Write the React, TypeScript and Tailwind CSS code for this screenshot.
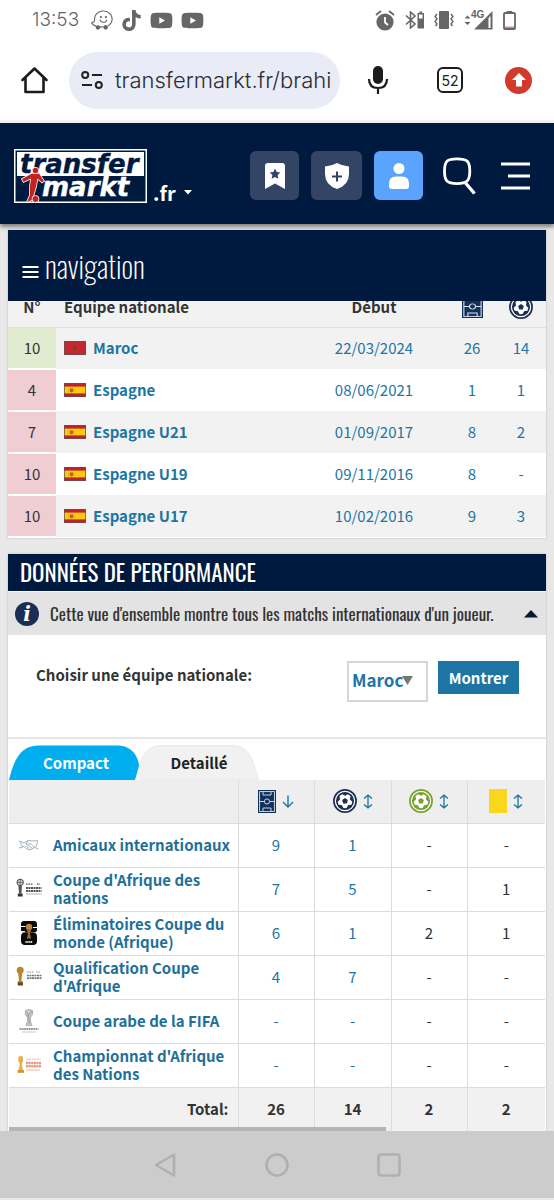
import React from "react";
import { FaTiktok, FaWaze, FaYoutube } from "react-icons/fa";

const BALL_ANGLES = [0, 72, 144, 216, 288];

function Ball({ color, size }: { color: string; size: number }) {
  return (
    <svg width={size} height={size} viewBox="0 0 24 24" aria-hidden="true">
      <circle cx="12" cy="12" r="11.1" fill="#fff" stroke={color} strokeWidth="1.7" />
      <circle cx="12" cy="12" r="8.2" fill="#fff" stroke={color} strokeWidth="1.7" />
      <path d="M12 9 L14.9 11.1 L13.8 14.5 H10.2 L9.1 11.1 Z" fill={color} />
      {BALL_ANGLES.map((a) => (
        <g key={a} transform={`rotate(${a} 12 12)`}>
          <path d="M8.8 3.8 H15.2 L14.3 5.6 L12 6.8 L9.7 5.6 Z" fill={color} />
        </g>
      ))}
    </svg>
  );
}

function Pitch({ wide = false }: { wide?: boolean }) {
  return (
    <svg width={wide ? 21 : 18} height={23} viewBox="0 0 18 23" preserveAspectRatio="none" aria-hidden="true">
      <rect width="18" height="23" fill="#12305c" />
      <g fill="none" stroke="#dfe6ee" strokeWidth="0.9">
        <rect x="1.6" y="1.6" width="14.8" height="19.8" />
        <path d="M1.6 11.5 H6.4 M11.6 11.5 H16.4" />
        <circle cx="9" cy="11.5" r="2.6" />
        <path d="M5 1.6 V5 H13 V1.6 M5 21.4 V18 H13 V21.4" />
      </g>
    </svg>
  );
}

function SortBoth() {
  return (
    <svg width="10" height="15" viewBox="0 0 10 15" fill="none" stroke="#1d75a3" strokeWidth="1.3" aria-hidden="true">
      <path d="M5 1.2 V13.8 M1 4.6 L5 1.2 L9 4.6 M1 10.4 L5 13.8 L9 10.4" />
    </svg>
  );
}

function SortDown() {
  return (
    <svg width="12" height="13" viewBox="0 0 12 13" fill="none" stroke="#1d75a3" strokeWidth="1.4" aria-hidden="true">
      <path d="M6 0.5 V11.8 M1 7 L6 12 L11 7" />
    </svg>
  );
}

function Flag({ country }: { country: "ma" | "es" }) {
  return (
    <svg className="block" width="22" height="14" viewBox="0 0 22 14" aria-hidden="true">
      {country === "ma" ? (
        <>
          <rect width="22" height="14" fill="#c4272f" />
          <path d="M11 4.6 L11.7 6.4 L13.4 6.4 L12.1 7.6 L12.6 9.4 L11 8.3 L9.4 9.4 L9.9 7.6 L8.6 6.4 L10.3 6.4 Z" fill="#5b4a2a" />
        </>
      ) : (
        <>
          <rect width="22" height="14" fill="#c0212b" />
          <rect y="3.6" width="22" height="6.8" fill="#fdc90a" />
          <path d="M6 5.4 H9 V8 Q9 9.4 7.5 9.4 Q6 9.4 6 8 Z" fill="#b5612c" />
          <path d="M5 5.6 V9.2 M10 5.6 V9.2" stroke="#c98a3a" strokeWidth="0.7" />
        </>
      )}
      <rect x="0.5" y="0.5" width="21" height="13" fill="none" stroke="#555" strokeOpacity="0.7" />
    </svg>
  );
}

type Emblem = "friendly" | "afcon" | "worldcup" | "afconq" | "arab" | "chan";

function Cup({ fill }: { fill: string }) {
  return (
    <g fill={fill}>
      <circle cx="4.2" cy="6.2" r="3.5" />
      <path d="M2.2 9 H6.2 L5.4 17 H3 Z" />
      <rect x="1.8" y="17" width="5" height="4" />
    </g>
  );
}

function CompetitionLogo({ kind }: { kind: Emblem }) {
  return (
    <svg className="block" width="26" height="26" viewBox="0 0 26 26" aria-hidden="true">
      {kind === "friendly" && (
        <g fill="none" stroke="#9aa9b3" strokeWidth="0.9">
          <path d="M3 9 L8 11 L12 8.5 L17 9 L22 8.6 M3 16 L7 15 M22 9.2 L20 14.5 M4 10.5 L7 15" />
          <path d="M7 14 L11 17 Q13 18.8 15 17.4 L20 14.5 M12 9 L10 12 Q12 13.2 14 11.4 L18.5 15 M10 14 L13.5 16.6 M12 13 L16 16.2" />
          <path d="M18 15.4 L22.5 17" />
        </g>
      )}
      {kind === "afcon" && (
        <>
          <g fill="#555">
            <circle cx="4.2" cy="6.4" r="3.2" fill="#ddd" stroke="#444" strokeWidth="1" />
            <path d="M1 6.4 H7.4 M4.2 3 V10" stroke="#555" strokeWidth="0.8" />
            <path d="M2.4 9.6 H6 L5.4 17.5 H3 Z" />
            <rect x="1.8" y="17.5" width="4.8" height="3" fill="#333" />
          </g>
          <path d="M10 8.2 H17 M21 8.2 H24" stroke="#555" strokeWidth="1.2" strokeDasharray="1.6 .8" />
          <path d="M10 12 H25.5 M10 15 H25.5" stroke="#555" strokeWidth="2.2" strokeDasharray="2 .5" />
          <path d="M10 18 H25.5" stroke="#aaa" strokeWidth="0.9" />
        </>
      )}
      {kind === "worldcup" && (
        <>
          <rect x="5" y="1" width="16" height="11.5" rx="3" fill="#0b0b0b" />
          <rect x="5" y="12.5" width="16" height="12.5" rx="4" fill="#0b0b0b" />
          <path d="M5 6.5 H9.5 M17 7.5 H21 M5 11.6 H9" stroke="#fff" strokeWidth="1" />
          <circle cx="13" cy="7" r="3.2" fill="#b5853d" />
          <path d="M10.8 9 H15.2 L14 14 L15.2 18.5 H10.8 L12 14 Z" fill="#98702f" />
          <path d="M9.5 22 H16.5" stroke="#ddd" strokeWidth="1.8" strokeDasharray="1.3 .5" />
        </>
      )}
      {kind === "afconq" && (
        <>
          <Cup fill="#b8872f" />
          <rect x="1.8" y="18.5" width="5" height="3" fill="#5d4526" />
          <path d="M11 8 H18" stroke="#888" strokeWidth="1" strokeDasharray="1.6 .8" />
          <path d="M20 8 H24" stroke="#d7a0a0" strokeWidth="1" />
          <path d="M11 11.5 H25.5 M11 14.2 H25.5" stroke="#777" strokeWidth="1.7" strokeDasharray="2 .5" />
        </>
      )}
      {kind === "arab" && (
        <>
          <path d="M9.5 2.5 Q13 .5 16.5 2.5 Q18 6 14.2 10 Q14.4 14 16 17.5 H10 Q11.7 13.5 11.8 10 Q8 6 9.5 2.5 Z" fill="#c9ccd0" stroke="#999" strokeWidth="0.7" />
          <path d="M10.5 4 Q14 8 13 16 M16 3 Q13 7 11.5 8" fill="none" stroke="#777" strokeWidth="0.6" />
          <path d="M3.5 21 H22.5" stroke="#777" strokeWidth="1.6" strokeDasharray="1.8 .5" />
          <path d="M6 24 H20" stroke="#bbb" strokeWidth="1" strokeDasharray="1.6 .5" />
        </>
      )}
      {kind === "chan" && (
        <>
          <path d="M2.4 5 Q4.6 3 7 5 Q7.6 9 5.8 12 L7 18.5 H2.4 L3.8 12 Q1.6 9 2.4 5 Z" fill="#e9b143" />
          <rect x="1.6" y="18" width="6.4" height="2.8" fill="#d79528" />
          <path d="M10.5 7.2 H24.5" stroke="#d9a9a2" strokeWidth="1" strokeDasharray="1.8 .8" />
          <path d="M10 11 H25 M10 14.3 H25" stroke="#ee9a80" strokeWidth="2.6" strokeDasharray="2.2 .4" />
          <path d="M10 18 H24" stroke="#f3c3ae" strokeWidth="1.2" />
        </>
      )}
    </svg>
  );
}

const teams: { no: string; flag: "ma" | "es"; name: string; date: string; games: string; goals: string }[] = [
  { no: "10", flag: "ma", name: "Maroc", date: "22/03/2024", games: "26", goals: "14" },
  { no: "4", flag: "es", name: "Espagne", date: "08/06/2021", games: "1", goals: "1" },
  { no: "7", flag: "es", name: "Espagne U21", date: "01/09/2017", games: "8", goals: "2" },
  { no: "10", flag: "es", name: "Espagne U19", date: "09/11/2016", games: "8", goals: "-" },
  { no: "10", flag: "es", name: "Espagne U17", date: "10/02/2016", games: "9", goals: "3" },
];

const competitions: { kind: Emblem; name: string; stats: string[] }[] = [
  { kind: "friendly", name: "Amicaux internationaux", stats: ["9", "1", "-", "-"] },
  { kind: "afcon", name: "Coupe d'Afrique des nations", stats: ["7", "5", "-", "1"] },
  { kind: "worldcup", name: "Éliminatoires Coupe du monde (Afrique)", stats: ["6", "1", "2", "1"] },
  { kind: "afconq", name: "Qualification Coupe d'Afrique", stats: ["4", "7", "-", "-"] },
  { kind: "arab", name: "Coupe arabe de la FIFA", stats: ["-", "-", "-", "-"] },
  { kind: "chan", name: "Championnat d'Afrique des Nations", stats: ["-", "-", "-", "-"] },
];

function StatusBar() {
  return (
    <div className="flex h-10 items-center justify-between pr-[38px] pl-8 font-['Inter',sans-serif] text-[#666]">
      <div className="flex items-center gap-2">
        <span className="mr-1 text-[19px] font-light">13:53</span>
        <FaWaze className="size-[22px]" />
        <FaTiktok className="size-[21px]" />
        <FaYoutube className="size-[23px]" />
        <FaYoutube className="size-[23px]" />
      </div>
      <div className="flex items-center gap-[10px]">
        <svg width="20" height="21" viewBox="0 0 20 21" aria-hidden="true">
          <circle cx="10" cy="12" r="8.6" fill="#666" />
          <path d="M1 5 L6 1 M19 5 L14 1" stroke="#666" strokeWidth="1.8" />
          <path d="M10 7 V12.5 L13 15" fill="none" stroke="#fff" strokeWidth="1.8" />
        </svg>
        <svg width="19" height="18" viewBox="0 0 19 18" aria-hidden="true">
          <path d="M1 4.5 L10 13 L5.500 17 V1 L10 5 L1 13.500" fill="none" stroke="#666" strokeWidth="1.600" />
          <path d="M14.500 0.500 H17 V2 H19 V17.500 H12.500 V2 H14.500 Z" fill="#666" />
          <rect x="14" y="3.500" width="3.500" height="4" fill="#fff" />
        </svg>
        <svg width="20" height="18" viewBox="0 0 20 18" aria-hidden="true">
          <rect x="5" y="0" width="10" height="18" rx="1" fill="#666" />
          <path d="M3 3 L1 5.5 L3 8 L1 10.5 L3 13 L1.5 15 M17 3 L19 5.5 L17 8 L19 10.5 L17 13 L18.500 15" fill="none" stroke="#666" strokeWidth="1.4" />
        </svg>
        <svg width="29" height="20" viewBox="0 0 29 20" aria-hidden="true">
          <path d="M0.500 8.500 L3.500 5.500 L6.500 8.500 Z M0.500 12 H6.500 L3.500 15 Z" fill="#666" />
          <path d="M10 19.500 L28.500 1 V19.500 Z" fill="#666" />
          <path d="M24.500 8 V18 H26.500 V6 Z" fill="#fff" />
          <text x="7" y="8" fontSize="10" fontWeight="700" fill="#666" fontFamily="Liberation Sans">4G</text>
        </svg>
        <svg width="13" height="19" viewBox="0 0 13 19" aria-hidden="true">
          <path d="M4 1.800 V0.500 H9 V1.800" fill="#666" stroke="#666" />
          <rect x="1" y="2" width="11" height="16" rx="1" fill="none" stroke="#666" strokeWidth="1.800" />
          <rect x="2" y="15.500" width="9" height="1.500" fill="#e08a80" />
        </svg>
      </div>
    </div>
  );
}

function BrowserBar() {
  return (
    <div className="flex h-[83px] items-center border-b-3 border-[#f3f3f6] pr-[22px] pl-5">
      <button aria-label="Accueil" className="mr-5 shrink-0">
        <svg className="block" width="29" height="28" viewBox="0 0 29 28" fill="none" stroke="#1b1b1b" strokeWidth="2.600" strokeLinejoin="round" strokeLinecap="round" aria-hidden="true">
          <path d="M2.500 14 L14.500 2.500 L26.500 14 M5.500 12 V26 H23.500 V12" />
        </svg>
      </button>
      <div className="flex h-[57px] min-w-0 flex-1 items-center gap-3 rounded-full bg-[#e9ecf6] pr-2 pl-3">
        <svg className="shrink-0" width="22" height="20" viewBox="0 0 22 20" fill="none" stroke="#222" strokeWidth="2" aria-hidden="true">
          <circle cx="4.200" cy="5" r="3" />
          <path d="M11 5 H21 M1 15 H11" />
          <circle cx="17.800" cy="15" r="3" />
        </svg>
        <input
          aria-label="Adresse"
          defaultValue="transfermarkt.fr/brahi"
          className="w-full min-w-0 bg-transparent font-['Inter',sans-serif] text-[22px] font-light text-[#2b2d33] outline-none"
        />
      </div>
      <button aria-label="Recherche vocale" className="ml-5 shrink-0">
        <svg className="block" width="36" height="36" viewBox="0 0 36 36" aria-hidden="true">
          <rect x="13" y="4" width="10" height="18" rx="5" fill="#1b1b1b" />
          <path d="M9 17 Q9 26 18 26 Q27 26 27 17 M18 26 V32" fill="none" stroke="#1b1b1b" strokeWidth="2.200" />
        </svg>
      </button>
      <button aria-label="Onglets" className="ml-[41px] flex size-[26px] shrink-0 items-center justify-center rounded-md border-2 border-[#1b1b1b] font-['Inter',sans-serif] text-[14px] text-[#222]">
        52
      </button>
      <button aria-label="Mise à jour" className="ml-[42px] flex size-[27px] shrink-0 items-center justify-center rounded-full bg-[#d33a2e]">
        <svg width="16" height="14" viewBox="0 0 16 14" aria-hidden="true">
          <path d="M8 0 L15 7 H11 V13.500 H5 V7 H1 Z" fill="#fff" />
        </svg>
      </button>
    </div>
  );
}

function SiteHeader() {
  return (
    <header className="relative z-20 flex h-[101px] items-center bg-[#001a3f] pt-1 pr-6 pl-[14px] shadow-[0_3px_4px_rgba(0,0,0,0.45)]">
      <a href="#accueil" aria-label="transfermarkt" className="shrink-0">
        <svg className="block" width="133" height="54" viewBox="0 0 133 54" aria-hidden="true">
          <rect width="133" height="54" fill="#fff" />
          <rect x="1.500" y="1.500" width="130" height="51" fill="#001a3f" />
          <rect x="3" y="3" width="127" height="24" fill="#fff" />
          <g fontFamily="DejaVu Sans" fontSize="26" fontWeight="700" fontStyle="italic">
            <text x="6" y="24" fill="#001a3f" stroke="#001a3f" strokeWidth="0.400">transfer</text>
            <text x="28" y="47" fill="#fff" stroke="#fff" strokeWidth="0.400">markt</text>
          </g>
          <g stroke="#fff" strokeWidth="1.600" paintOrder="stroke" fill="#c5221d">
            <path d="M8 30 L18 24.500 H25 L30 32 L28 33.500 L23.500 29.500 L22 38 L18 51 L13 53 L16 46 L16 37 L17 29.500 L9.500 33 Z" />
            <circle cx="21.500" cy="21.500" r="2.800" />
            <circle cx="21.500" cy="50" r="3" />
          </g>
        </svg>
      </a>
      <button className="mt-[34px] ml-[6px] flex shrink-0 items-center gap-2 text-[20px] leading-6 font-bold text-white">
        .fr
        <svg width="8" height="5" viewBox="0 0 8 5" aria-hidden="true"><path d="M0 0 H8 L4 4.500 Z" fill="#fff" /></svg>
      </button>
      <div className="ml-auto flex items-center">
        <button aria-label="Favoris" className="flex size-[49px] items-center justify-center rounded-md bg-[#334464]">
          <svg width="20" height="26" viewBox="0 0 20 26" aria-hidden="true">
            <path d="M3 0 H17 Q20 0 20 3 V26 L10 20.500 L0 26 V3 Q0 0 3 0 Z" fill="#fff" />
            <path d="M10 5.500 L11.700 9 L15.400 9.400 L12.600 12 L13.400 15.800 L10 13.900 L6.600 15.800 L7.400 12 L4.600 9.400 L8.300 9 Z" fill="#334464" />
          </svg>
        </button>
        <button aria-label="Clubs" className="ml-3 flex h-[49px] w-[51px] items-center justify-center rounded-md bg-[#334464]">
          <svg width="24" height="26" viewBox="0 0 24 26" aria-hidden="true">
            <path d="M12 0 Q17 3 24 3.500 V11 Q24 22 12 26 Q0 22 0 11 V3.500 Q7 3 12 0 Z" fill="#fff" />
            <path d="M12 8.500 V18.500 M7 13.500 H17" stroke="#334464" strokeWidth="2" />
          </svg>
        </button>
        <button aria-label="Mon compte" className="ml-3 flex size-[49px] items-center justify-center rounded-md bg-[#5ba4fd]">
          <svg width="20" height="26" viewBox="0 0 20 26" fill="#fff" aria-hidden="true">
            <circle cx="10" cy="5.500" r="5.500" />
            <path d="M7 13.500 H13 Q20 13.500 20 20.500 V23 Q20 26 17 26 H3 Q0 26 0 23 V20.500 Q0 13.500 7 13.500 Z" />
          </svg>
        </button>
        <button aria-label="Rechercher" className="ml-5">
          <svg className="block" width="33" height="38" viewBox="0 0 33 38" fill="none" stroke="#fff" strokeWidth="2.800" aria-hidden="true">
            <path d="M14 1.800 C24 1.800 26.800 4 26.800 14 C26.800 24 24 26.600 14 26.600 C4 26.600 1.500 24 1.500 14 C1.500 4 4 1.800 14 1.800 Z" />
            <path d="M22.500 26 L31.500 36.500" strokeWidth="3.400" />
          </svg>
        </button>
        <button aria-label="Menu" className="ml-6">
          <svg className="block" width="30" height="28" viewBox="0 0 30 28" stroke="#fff" strokeWidth="2.800" aria-hidden="true">
            <path d="M1 2 H30 M8 14 H30 M1 26 H30" />
          </svg>
        </button>
      </div>
    </header>
  );
}

function NationalTeams() {
  return (
    <section className="bg-white shadow-[0_0_2px_rgba(0,0,0,0.2)]">
      <button className="relative z-10 flex h-[71px] w-full items-center gap-[6px] bg-[#001a3f] pl-[14px] text-white">
        <svg className="mt-3" width="17" height="12" viewBox="0 0 17 12" stroke="#fff" strokeWidth="2" aria-hidden="true">
          <path d="M0.500 1 H16.500 M0.500 6 H16.500 M0.500 11 H16.500" />
        </svg>
        <span className="font-['Oswald',sans-serif] text-[30px] font-extralight">navigation</span>
      </button>
      <table className="-mt-[14px] w-full table-fixed border-collapse text-center text-[15px] leading-5">
        <colgroup>
          <col className="w-[48px]" />
          <col />
          <col className="w-[148px]" />
          <col className="w-[48px]" />
          <col className="w-[50px]" />
        </colgroup>
        <thead>
          <tr className="h-10 border-b border-[#e0e0e0] bg-[#f2f2f2] text-[#333]">
            <th className="font-bold">N°</th>
            <th className="pl-2 text-left font-bold">Équipe nationale</th>
            <th className="font-bold">Début</th>
            <th aria-label="Matchs"><span className="flex justify-center"><Pitch wide /></span></th>
            <th aria-label="Buts"><span className="flex justify-center"><Ball color="#1c2f52" size={24} /></span></th>
          </tr>
        </thead>
        <tbody className="text-[#1d75a3]">
          {teams.map((t, i) => (
            <tr key={t.name} className={i % 2 === 0 ? "h-[42px] bg-[#f2f2f2]" : "h-[42px] bg-white"}>
              <td className={i === 0 ? "border-b-2 border-white bg-[#e1ebd0] text-[#333]" : "border-b-2 border-white bg-[#f0cdd2] text-[#333]"}>{t.no}</td>
              <td className="pl-2">
                <a href="#equipe" className="flex items-center gap-[7px] font-bold"><Flag country={t.flag} />{t.name}</a>
              </td>
              <td>{t.date}</td>
              <td>{t.games}</td>
              <td>{t.goals}</td>
            </tr>
          ))}
        </tbody>
      </table>
    </section>
  );
}

function Performance() {
  return (
    <section className="mt-4 bg-white shadow-[0_0_2px_rgba(0,0,0,0.2)]">
      <h2 className="flex h-[37px] items-center bg-[#001a3f] pl-3 font-['Oswald',sans-serif] text-[23px] text-white">
        DONNÉES DE PERFORMANCE
      </h2>
      <div className="flex h-11 items-center border-t border-[#f6f6f6] bg-[#e3e3e3] pr-2 pl-[7px] text-[#333]">
        <svg className="shrink-0" width="24" height="24" viewBox="0 0 24 24" aria-hidden="true">
          <circle cx="12" cy="12" r="12" fill="#1a2d52" />
          <text x="12" y="19" textAnchor="middle" fontFamily="DejaVu Serif" fontStyle="italic" fontWeight="700" fontSize="20" fill="#fff">i</text>
        </svg>
        <p className="ml-[11px] min-w-0 flex-1 font-['Oswald',sans-serif] text-[17px] whitespace-nowrap">
          Cette vue d'ensemble montre tous les matchs internationaux d'un joueur.
        </p>
        <svg className="shrink-0" width="14" height="8" viewBox="0 0 14 8" aria-hidden="true"><path d="M7 0 L14 7.500 H0 Z" fill="#0b1730" /></svg>
      </div>
      <form className="flex h-[104px] items-start border-b-2 border-[#e6e6e6] pt-[26px] pr-[27px] pl-7">
        <label htmlFor="team" className="mt-1 text-[15px] leading-5 font-bold text-[#333]">Choisir une équipe nationale:</label>
        <span className="relative ml-auto">
          <select id="team" className="block h-[41px] w-[81px] appearance-none border-2 border-[#d6d6d6] bg-white pb-[3px] pl-[3px] text-[17px] font-bold text-[#1d75a3]">
            <option>Maroc</option>
          </select>
          <svg className="pointer-events-none absolute top-[15px] right-[15px]" width="11" height="9" viewBox="0 0 11 9" aria-hidden="true"><path d="M0 0 H11 L5.500 9 Z" fill="#777" /></svg>
        </span>
        <button type="button" className="ml-[10px] h-[33px] w-[81px] bg-[#1d75a3] text-[15px] leading-5 font-bold text-white">Montrer</button>
      </form>
      <div className="px-px">
        <div className="flex pt-[6px] text-[15px] leading-5 font-bold">
          <button className="relative z-10 h-[35px] w-[130px] text-white">
            <svg className="absolute inset-0" width="130" height="35" viewBox="0 0 130 35" aria-hidden="true">
              <path d="M0 35 C5 15 11 1 29 0.500 H110 C122 1 129 10 130 21 L126 35 Z" fill="#00aeef" />
            </svg>
            <span className="relative ml-1">Compact</span>
          </button>
          <button className="relative h-[35px] w-[120px] text-[#222]">
            <svg className="absolute inset-0" width="120" height="35" viewBox="0 0 120 35" aria-hidden="true">
              <path d="M-4 35 C2 10 8 1 22 0.500 H93 C110 1 114 14 119.500 35 Z" fill="#f1f1f1" stroke="#e4e4e4" strokeWidth="0.800" />
            </svg>
            <span className="relative">Detaillé</span>
          </button>
        </div>
        <table className="w-full table-fixed border-collapse text-center text-[15px] leading-[18px] text-[#333]">
          <colgroup>
            <col />
            <col className="w-[76px]" />
            <col className="w-[77px]" />
            <col className="w-[76px]" />
            <col className="w-[78px]" />
          </colgroup>
          <thead>
            <tr className="h-[43px] border-b border-[#dcdcdc] bg-[#eeeeee]">
              <th aria-label="Compétition" />
              <th aria-label="Matchs" className="border-l border-[#dcdcdc]"><span className="flex items-center justify-center gap-[6px]"><Pitch /><SortDown /></span></th>
              <th aria-label="Buts" className="border-l border-[#dcdcdc]"><span className="flex items-center justify-center gap-[6px]"><Ball color="#1c2f52" size={24} /><SortBoth /></span></th>
              <th aria-label="Passes décisives" className="border-l border-[#dcdcdc]"><span className="flex items-center justify-center gap-[6px]"><Ball color="#76a22d" size={24} /><SortBoth /></span></th>
              <th aria-label="Cartons jaunes" className="border-l border-[#dcdcdc]"><span className="flex items-center justify-center gap-[6px]"><span className="h-6 w-[18px] bg-[#f9d71f]" /><SortBoth /></span></th>
            </tr>
          </thead>
          <tbody>
            {competitions.map((c) => (
              <tr key={c.name} className="h-11 border-b border-[#dcdcdc]">
                <td className="p-0 pl-[7px]">
                  <a href="#competition" className="flex items-center gap-[11px] text-left font-bold text-[#1f7099]">
                    <span className="shrink-0"><CompetitionLogo kind={c.kind} /></span>
                    <span>{c.name}</span>
                  </a>
                </td>
                {c.stats.map((s, i) => (
                  <td key={i} className={i < 2 ? "border-l border-[#dcdcdc] text-[#1d75a3]" : "border-l border-[#dcdcdc]"}>{s}</td>
                ))}
              </tr>
            ))}
          </tbody>
          <tfoot>
            <tr className="h-11 bg-[#f1f1f1] font-bold">
              <td className="pr-[9px] text-right">Total:</td>
              {["26", "14", "2", "2"].map((s, i) => (
                <td key={i} className="border-l border-[#dcdcdc]">{s}</td>
              ))}
            </tr>
          </tfoot>
        </table>
      </div>
    </section>
  );
}

function SystemNav() {
  return (
    <nav className="relative z-10 flex h-[67px] items-center justify-center gap-[88px] bg-[#cccccc]">
      <div className="absolute -top-1 left-[9px] h-1 w-[68%] bg-[#b5b5b5]" />
      <button aria-label="Retour">
        <svg className="block" width="24" height="26" viewBox="0 0 24 26" fill="none" stroke="#b0b0b0" strokeWidth="2.600" strokeLinejoin="round" aria-hidden="true"><path d="M21 2.500 V23.500 L3 13 Z" /></svg>
      </button>
      <button aria-label="Écran d'accueil">
        <svg className="block" width="24" height="26" viewBox="0 0 24 26" fill="none" stroke="#b0b0b0" strokeWidth="2.600" aria-hidden="true"><circle cx="12" cy="13" r="10.500" /></svg>
      </button>
      <button aria-label="Applications récentes">
        <svg className="block" width="24" height="26" viewBox="0 0 24 26" fill="none" stroke="#b0b0b0" strokeWidth="2.600" aria-hidden="true"><rect x="1.500" y="2.500" width="21" height="21" rx="2.500" /></svg>
      </button>
    </nav>
  );
}

export default function App() {
  return (
    <div className="min-h-screen bg-[#e8e8e8] pb-[2px] font-['Noto_Sans_CJK_SC',sans-serif]">
      <div className="bg-white">
        <StatusBar />
        <BrowserBar />
      </div>
      <SiteHeader />
      <main className="px-2 pt-[6px]">
        <NationalTeams />
        <Performance />
      </main>
      <SystemNav />
    </div>
  );
}
